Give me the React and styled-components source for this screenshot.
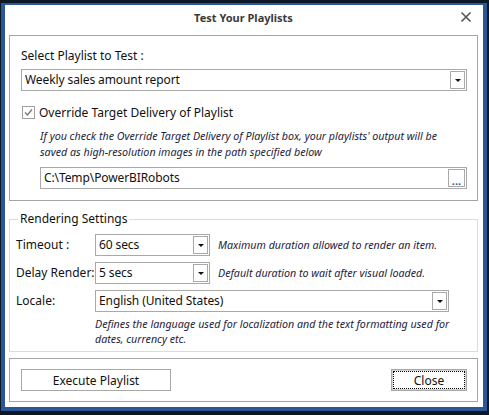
import React from "react";
import styled, { createGlobalStyle } from "styled-components";

const GlobalStyle = createGlobalStyle`
  html, body {
    margin: 0;
    padding: 0;
    background: #0d1826;
  }
  * {
    box-sizing: border-box;
  }
`;

const Screen = styled.div`
  width: 489px;
  height: 415px;
  padding: 3px 2px 4px 1px;
  background: #0d1826;
  font-family: "Noto Sans", "Open Sans", sans-serif;
  font-size: 12px;
  color: #111;
`;

const Frame = styled.div`
  height: 100%;
  border-style: solid;
  border-color: #2b5797;
  border-width: 2px 4px 4px 4px;
  background: #fff;
  padding: 0 5px 3px 4px;
  display: flex;
  flex-direction: column;
`;

const TitleBar = styled.div`
  height: 24px;
  margin-bottom: 6px;
  display: flex;
  align-items: center;
  justify-content: center;
  position: relative;
`;

const Title = styled.div`
  font-weight: bold;
  color: #3a3a3a;
  font-size: 11px;
`;

const CloseX = styled.button`
  position: absolute;
  right: 6px;
  top: 6px;
  width: 12px;
  height: 12px;
  padding: 0;
  border: none;
  background: none;
  display: flex;
`;

const Box = styled.div`
  border: 1px solid #a5a5a5;
  padding: ${(p) => p.$pad || "0"};
  display: flex;
  flex-direction: column;
`;

const Label = styled.div`
  line-height: 16px;
  height: 16px;
  white-space: nowrap;
  width: ${(p) => p.$w || "auto"};
  flex: none;
`;

const Combo = styled.div`
  display: flex;
  align-items: stretch;
  height: ${(p) => p.$h || 22}px;
  width: ${(p) => p.$w || "auto"};
  margin: ${(p) => p.$m || "0"};
  border: 1px solid #a9a9a9;
  background: #fff;
  flex: none;
`;

const ComboText = styled.div`
  flex: 1;
  padding-left: 3px;
  line-height: 20px;
  white-space: nowrap;
  overflow: hidden;
  letter-spacing: -0.1px;
`;

const DropBtn = styled.div`
  width: 15px;
  margin: 1px;
  border: 1px solid #a9a9a9;
  display: flex;
  align-items: center;
  justify-content: center;
  &::after {
    content: "";
    border-left: 3px solid transparent;
    border-right: 3px solid transparent;
    border-top: 3px solid #111;
    margin-top: 1px;
  }
`;

const DotsBtn = styled.div`
  width: 17px;
  margin: 1px;
  border: 1px solid #a9a9a9;
  font-size: 11px;
  font-weight: bold;
  line-height: 21px;
  text-align: center;
  color: #1f5a9a;
`;

const CheckRow = styled.label`
  display: flex;
  align-items: center;
  gap: 4px;
  margin-top: 13px;
  height: 16px;
  margin-left: 1px;
`;

const CheckBox = styled.span`
  width: 13px;
  height: 13px;
  border: 1px solid #a0a0a0;
  display: flex;
  align-items: center;
  justify-content: center;
  background: #fff;
`;

const Hint = styled.div`
  font-style: italic;
  font-size: 10.7px;
  line-height: ${(p) => p.$lh || 16}px;
  color: #23233d;
  margin: ${(p) => p.$m || "0"};
  white-space: nowrap;
`;

const Fieldset = styled.fieldset`
  margin: 10px 0 0 0;
  padding: 0;
  border: 1px solid #dcdcdc;
  min-width: 0;
`;

const Legend = styled.legend`
  margin-left: 8px;
  padding: 0 2px;
  line-height: 16px;
  font-size: 12px;
`;

const Settings = styled.div`
  padding: 7px 0 4px 6px;
  display: flex;
  flex-direction: column;
  gap: 6px;
`;

const Row = styled.div`
  display: flex;
  align-items: center;
  height: 22px;
`;

const Footer = styled(Box)`
  margin-top: 6px;
  flex-direction: row;
  justify-content: space-between;
  padding: 10px 10px 10px 11px;
`;

const Button = styled.button`
  font-family: inherit;
  font-size: 12px;
  color: #111;
  height: 22px;
  width: ${(p) => p.$w}px;
  background: #fff;
  border: 1px solid #a8a8a8;
  padding: 0;
  ${(p) =>
    p.$focus &&
    `
    box-shadow: inset 0 0 0 1px #d4d4d4;
    outline: 1px dotted #000;
    outline-offset: -3px;
  `}
`;

export default function App() {
  return (
    <Screen>
      <GlobalStyle />
      <Frame>
        <TitleBar>
          <Title>Test Your Playlists</Title>
          <CloseX aria-label="Close">
            <svg width="12" height="12" viewBox="0 0 12 12">
              <path d="M1.5 1.5 L10.5 10.5 M10.5 1.5 L1.5 10.5" stroke="#555" strokeWidth="1.6" />
            </svg>
          </CloseX>
        </TitleBar>

        <Box $pad="12px 10px 11px 11px">
          <Label>Select Playlist to Test :</Label>
          <Combo $m="5px 0 0 0">
            <ComboText>Weekly sales amount report</ComboText>
            <DropBtn />
          </Combo>
          <CheckRow>
            <CheckBox>
              <svg width="9" height="9" viewBox="0 0 9 9">
                <path d="M1 4.5 L3.5 7 L8 1.5" stroke="#7a7a7a" strokeWidth="1.4" fill="none" />
              </svg>
            </CheckBox>
            <span>Override Target Delivery of Playlist</span>
          </CheckRow>
          <Hint $m="8px 0 0 19px">
            If you check the Override Target Delivery of Playlist box, your playlists' output will be
            <br />
            saved as high-resolution images in the path specified below
          </Hint>
          <Combo $m="7px 0 0 19px">
            <ComboText>C:\Temp\PowerBIRobots</ComboText>
            <DotsBtn>...</DotsBtn>
          </Combo>
        </Box>

        <Fieldset>
          <Legend>Rendering Settings</Legend>
          <Settings>
            <Row>
              <Label $w="79px">Timeout :</Label>
              <Combo $w="115px">
                <ComboText>60 secs</ComboText>
                <DropBtn />
              </Combo>
              <Hint $m="0 0 0 8px">Maximum duration allowed to render an item.</Hint>
            </Row>
            <Row>
              <Label $w="79px">Delay Render:</Label>
              <Combo $w="115px">
                <ComboText>5 secs</ComboText>
                <DropBtn />
              </Combo>
              <Hint $m="0 0 0 8px">Default duration to wait after visual loaded.</Hint>
            </Row>
            <Row>
              <Label $w="79px">Locale:</Label>
              <Combo $w="354px">
                <ComboText>English (United States)</ComboText>
                <DropBtn />
              </Combo>
            </Row>
            <Hint $lh={15} $m="-1px 0 0 79px">
              Defines the language used for localization and the text formatting used for
              <br />
              dates, currency etc.
            </Hint>
          </Settings>
        </Fieldset>

        <Footer>
          <Button $w={150}>Execute Playlist</Button>
          <Button $w={76} $focus>
            Close
          </Button>
        </Footer>
      </Frame>
    </Screen>
  );
}
